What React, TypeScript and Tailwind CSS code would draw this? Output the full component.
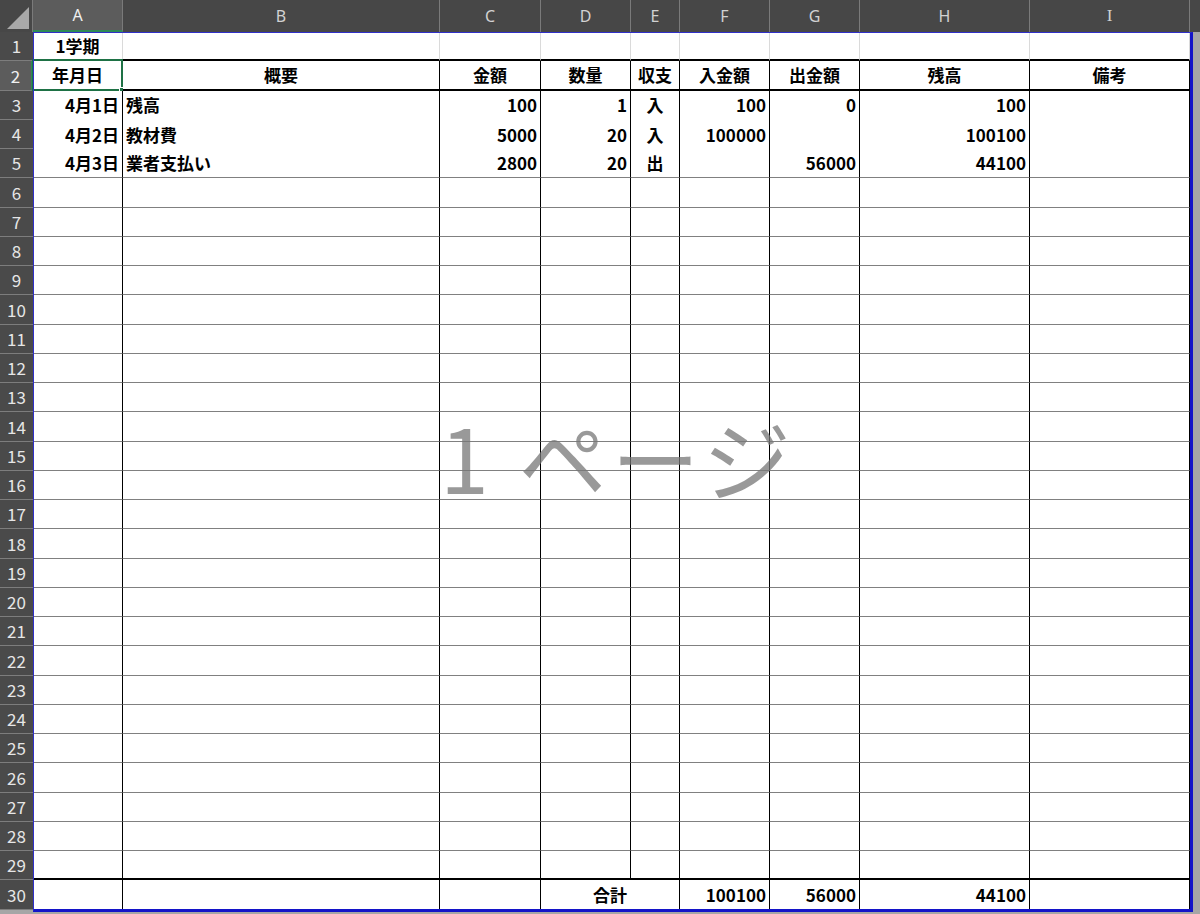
import React from "react";

type Align = "l" | "c" | "r";
type Cell = { t?: string; a?: Align; span?: number };

const COLS = [
  { k: "A", w: "w-[90px]" },
  { k: "B", w: "w-[317px]" },
  { k: "C", w: "w-[101px]" },
  { k: "D", w: "w-[90px]" },
  { k: "E", w: "w-[49px]" },
  { k: "F", w: "w-[90px]" },
  { k: "G", w: "w-[90px]" },
  { k: "H", w: "w-[170px]" },
  { k: "I", w: "w-[160px]" },
];

const blank = (n: number): Cell[] => Array.from({ length: n }, () => ({}));

const DATA: Record<number, Cell[]> = {
  1: [{ t: "1学期", a: "c" }, ...blank(8)],
  2: ["年月日", "概要", "金額", "数量", "収支", "入金額", "出金額", "残高", "備考"].map((t) => ({ t, a: "c" as Align })),
  3: [
    { t: "4月1日", a: "r" },
    { t: "残高", a: "l" },
    { t: "100", a: "r" },
    { t: "1", a: "r" },
    { t: "入", a: "c" },
    { t: "100", a: "r" },
    { t: "0", a: "r" },
    { t: "100", a: "r" },
    {},
  ],
  4: [
    { t: "4月2日", a: "r" },
    { t: "教材費", a: "l" },
    { t: "5000", a: "r" },
    { t: "20", a: "r" },
    { t: "入", a: "c" },
    { t: "100000", a: "r" },
    {},
    { t: "100100", a: "r" },
    {},
  ],
  5: [
    { t: "4月3日", a: "r" },
    { t: "業者支払い", a: "l" },
    { t: "2800", a: "r" },
    { t: "20", a: "r" },
    { t: "出", a: "c" },
    {},
    { t: "56000", a: "r" },
    { t: "44100", a: "r" },
    {},
  ],
  30: [
    {},
    {},
    {},
    { t: "合計", a: "c", span: 2 },
    { t: "100100", a: "r" },
    { t: "56000", a: "r" },
    { t: "44100", a: "r" },
    {},
  ],
};

const ROWS = Array.from({ length: 30 }, (_, i) => i + 1);

function lineClass(r: number) {
  if (r === 1) return "border-r border-r-[#dadada] border-b-2 border-b-black";
  if (r === 2) return "border-r border-r-black border-b-2 border-b-black";
  if (r === 3 || r === 4) return "border-r border-r-black";
  if (r === 29) return "border-r border-r-black border-b-2 border-b-black";
  if (r === 30) return "border-r border-r-black";
  return "border-r border-r-black border-b border-b-[#808080]";
}

const alignClass: Record<Align, string> = {
  l: "justify-start pl-[3px]",
  c: "justify-center",
  r: "justify-end pr-[3px]",
};

function SheetRow({ r }: { r: number }) {
  const cells = DATA[r] ?? blank(9);
  let col = 0;
  return (
    <div className="flex h-[29.25px]">
      <div
        className={
          r === 2
            ? "w-[33px] shrink-0 flex items-center justify-center bg-[#5c5c5c] border-b border-b-[#7d7d7d] border-r-2 border-r-[#2f8a55] text-[#f0f0f0] text-[17px]"
            : "w-[33px] shrink-0 flex items-center justify-center bg-[#4a4a4a] border-b border-b-[#7d7d7d] text-[#e6e6e6] text-[17px]"
        }
      >
        {r}
      </div>
      {cells.map((c, i) => {
        const width = c.span === 2 ? "w-[139px]" : COLS[col].w;
        const isA2 = r === 2 && col === 0;
        col += c.span ?? 1;
        return (
          <div
            key={i}
            className={`${width} shrink-0 relative flex items-center bg-white font-bold text-[17px] text-black ${lineClass(r)} ${alignClass[c.a ?? "l"]}`}
          >
            {c.t}
            {isA2 && (
              <>
                <div className="absolute -left-[1px] -top-[2px] -right-[1px] -bottom-[2px] border-2 border-[#1e7145]" />
                <div className="absolute -right-[4px] -bottom-[5px] w-[7px] h-[7px] bg-[#1e7145] border border-white" />
              </>
            )}
          </div>
        );
      })}
    </div>
  );
}

export default function App() {
  return (
    <div className="relative w-[1200px] h-[914px] overflow-hidden bg-[#a6a6a6] font-['Noto_Sans_CJK_JP','Noto_Sans',sans-serif]">
      {/* column letters */}
      <div className="flex h-[32px] bg-[#474747] font-['Noto_Sans',sans-serif] text-[16px] text-[#d2d2d2]">
        <div className="relative w-[33px] shrink-0 border-r border-r-[#7a7a7a]">
          <svg className="absolute right-[3px] bottom-[3px]" width="22" height="22" viewBox="0 0 22 22">
            <polygon points="22,0 22,22 0,22" fill="#a9a9a9" />
          </svg>
        </div>
        {COLS.map((c) => (
          <div
            key={c.k}
            className={
              c.k === "A"
                ? `${c.w} shrink-0 flex items-center justify-center bg-[#5c5c5c] border-r border-r-[#7a7a7a] border-b-2 border-b-[#2f8a55] text-[#f0f0f0]`
                : `${c.w} shrink-0 flex items-center justify-center border-r border-r-[#7a7a7a]`
            }
          >
            {c.k === "I" ? <span className="font-['Liberation_Serif',serif] text-[17px]">I</span> : c.k}
          </div>
        ))}
      </div>

      <div className="relative">
        {ROWS.map((r) => (
          <SheetRow key={r} r={r} />
        ))}

        {/* print area outline */}
        <div className="pointer-events-none absolute left-[33px] top-0 w-[1160px] h-[880px] border-l border-t border-l-[#3030c8] border-t-[#3030c8] border-r-[3px] border-b-[3px] border-r-[#1414c8] border-b-[#1414c8]" />

        {/* page watermark */}
        <div className="pointer-events-none absolute left-[440px] top-[380px] text-[88px] leading-none tracking-[5px] font-normal text-[#777777]/75 whitespace-pre">
          1 ページ
        </div>
      </div>
    </div>
  );
}
